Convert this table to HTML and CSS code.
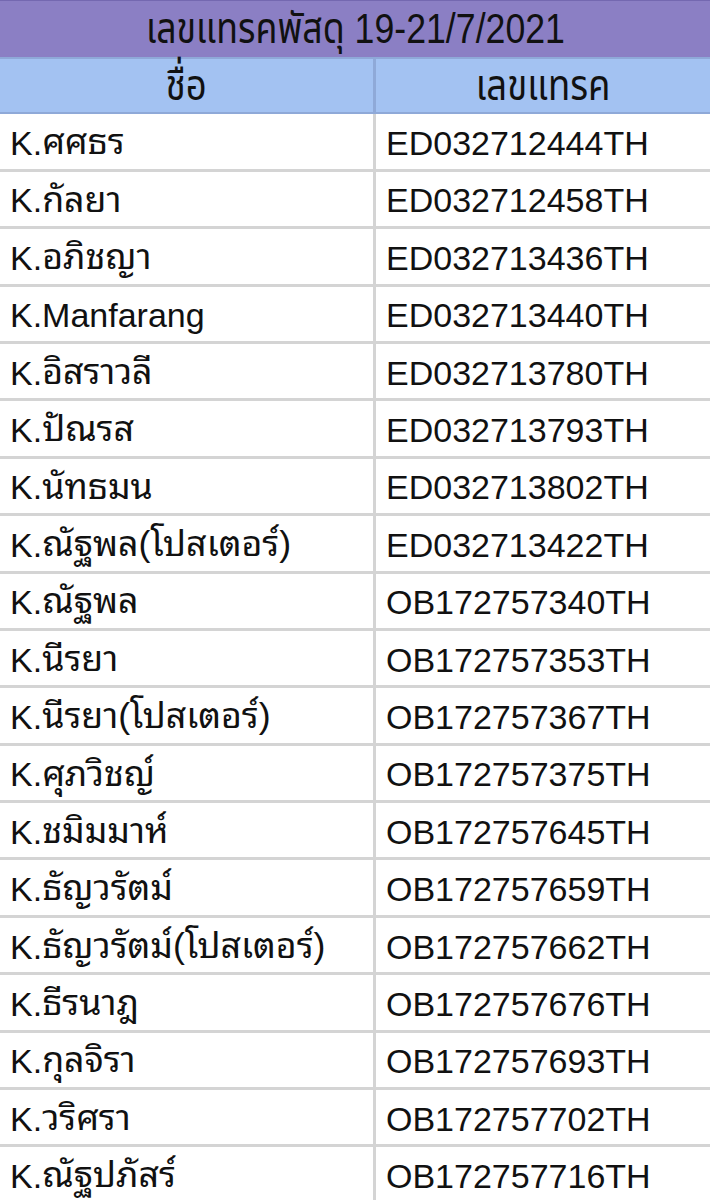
FILE: index.html
```html
<!DOCTYPE html>
<html lang="th">
<head>
<meta charset="utf-8">
<link rel="stylesheet" href="styles.css">
</head>
<body>
<div class="sheet">
  <div class="title"><span class="narrow">เลขแทรคพัสดุ 19-21/7/2021</span></div>
  <div class="grid">
    <div class="cell head first"><span class="narrow">ชื่อ</span></div>
    <div class="cell head"><span class="narrow">เลขแทรค</span></div>

    <div class="cell first">K.<span class="th">ศศธร</span></div><div class="cell">ED032712444TH</div>
    <div class="cell first">K.<span class="th">กัลยา</span></div><div class="cell">ED032712458TH</div>
    <div class="cell first">K.<span class="th">อภิชญา</span></div><div class="cell">ED032713436TH</div>
    <div class="cell first">K.Manfarang</div><div class="cell">ED032713440TH</div>
    <div class="cell first">K.<span class="th">อิสราวลี</span></div><div class="cell">ED032713780TH</div>
    <div class="cell first">K.<span class="th">ปัณรส</span></div><div class="cell">ED032713793TH</div>
    <div class="cell first">K.<span class="th">นัทธมน</span></div><div class="cell">ED032713802TH</div>
    <div class="cell first">K.<span class="th">ณัฐพล(โปสเตอร์)</span></div><div class="cell">ED032713422TH</div>
    <div class="cell first">K.<span class="th">ณัฐพล</span></div><div class="cell">OB172757340TH</div>
    <div class="cell first">K.<span class="th">นีรยา</span></div><div class="cell">OB172757353TH</div>
    <div class="cell first">K.<span class="th">นีรยา(โปสเตอร์)</span></div><div class="cell">OB172757367TH</div>
    <div class="cell first">K.<span class="th">ศุภวิชญ์</span></div><div class="cell">OB172757375TH</div>
    <div class="cell first">K.<span class="th">ชมิมมาห์</span></div><div class="cell">OB172757645TH</div>
    <div class="cell first">K.<span class="th">ธัญวรัตม์</span></div><div class="cell">OB172757659TH</div>
    <div class="cell first">K.<span class="th">ธัญวรัตม์(โปสเตอร์)</span></div><div class="cell">OB172757662TH</div>
    <div class="cell first">K.<span class="th">ธีรนาฎ</span></div><div class="cell">OB172757676TH</div>
    <div class="cell first">K.<span class="th">กุลจิรา</span></div><div class="cell">OB172757693TH</div>
    <div class="cell first">K.<span class="th">วริศรา</span></div><div class="cell">OB172757702TH</div>
    <div class="cell first">K.<span class="th">ณัฐปภัสร์</span></div><div class="cell">OB172757716TH</div>
  </div>
</div>
</body>
</html>
```

FILE: styles.css
```css
html, body {
  margin: 0;
  padding: 0;
  background: #ffffff;
}

.sheet {
  width: 710px;
  font-family: "Liberation Sans", "Noto Sans Thai Looped", "Noto Sans Thai", "Noto Sans", sans-serif;
  color: #111111;
  overflow: hidden;
}

.title {
  height: 57px;
  background: #8b7fc4;
  border-top: 1px solid #7468b0;
  box-sizing: border-box;
  display: flex;
  align-items: center;
  justify-content: center;
  font-family: "Liberation Sans", "Noto Sans Thai", "Noto Sans", sans-serif;
  font-size: 42px;
  line-height: 1;
}

.narrow {
  display: inline-block;
  transform: scaleX(0.85);
}

.grid {
  display: grid;
  grid-template-columns: 376px 1fr;
  grid-auto-rows: 57.4px;
}

.cell {
  box-sizing: border-box;
  border-bottom: 3px solid #d4d4d4;
  display: flex;
  align-items: center;
  padding: 3px 0 0 10px;
  font-size: 34px;
  line-height: 1;
  white-space: nowrap;
}

.th {
  font-size: 35.7px;
}

.first {
  border-right: 3px solid #d4d4d4;
}

.head {
  background: #a3c2f2;
  border-top: 2px solid #8fa9d8;
  border-bottom: 2px solid #8fa9d8;
  justify-content: center;
  padding: 0;
  font-family: "Liberation Sans", "Noto Sans Thai", "Noto Sans", sans-serif;
  font-size: 43px;
}

.head.first {
  border-right: 3px solid #8fa9d8;
}
```
